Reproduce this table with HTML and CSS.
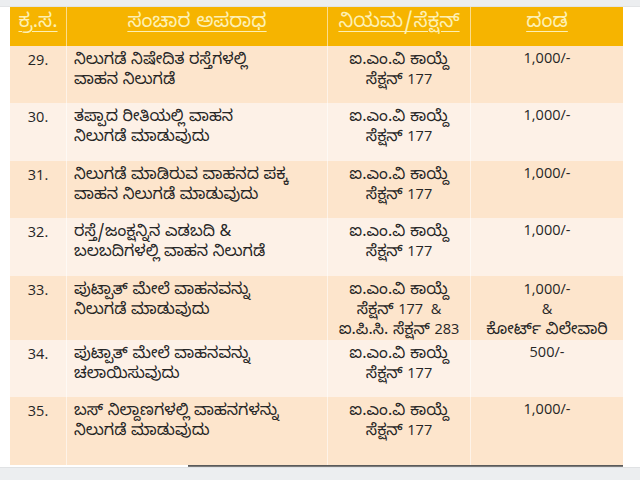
FILE: index.html
```html
<!DOCTYPE html>
<html lang="kn">
<head>
<meta charset="utf-8">
<link rel="stylesheet" href="styles.css">
</head>
<body>
<div class="topbar"></div>
<div class="sheet">
  <div class="grid">
    <div class="cell head">ಕ್ರ.ಸ.</div>
    <div class="cell head">ಸಂಚಾರ ಅಪರಾಧ</div>
    <div class="cell head">ನಿಯಮ/ಸೆಕ್ಷನ್</div>
    <div class="cell head">ದಂಡ</div>

    <div class="cell num odd">29.</div>
    <div class="cell txt odd">ನಿಲುಗಡೆ ನಿಷೇದಿತ ರಸ್ತೆಗಳಲ್ಲಿ<br>ವಾಹನ ನಿಲುಗಡೆ</div>
    <div class="cell ctr odd">ಐ.ಎಂ.ವಿ ಕಾಯ್ದೆ<br>ಸೆಕ್ಷನ್ <span class="d">177</span></div>
    <div class="cell ctr odd lat">1,000/-</div>

    <div class="cell num even">30.</div>
    <div class="cell txt even">ತಪ್ಪಾದ ರೀತಿಯಲ್ಲಿ ವಾಹನ<br>ನಿಲುಗಡೆ ಮಾಡುವುದು</div>
    <div class="cell ctr even">ಐ.ಎಂ.ವಿ ಕಾಯ್ದೆ<br>ಸೆಕ್ಷನ್ <span class="d">177</span></div>
    <div class="cell ctr even lat">1,000/-</div>

    <div class="cell num odd">31.</div>
    <div class="cell txt odd">ನಿಲುಗಡೆ ಮಾಡಿರುವ ವಾಹನದ ಪಕ್ಕ<br>ವಾಹನ ನಿಲುಗಡೆ ಮಾಡುವುದು</div>
    <div class="cell ctr odd">ಐ.ಎಂ.ವಿ ಕಾಯ್ದೆ<br>ಸೆಕ್ಷನ್ <span class="d">177</span></div>
    <div class="cell ctr odd lat">1,000/-</div>

    <div class="cell num even">32.</div>
    <div class="cell txt even">ರಸ್ತೆ/ಜಂಕ್ಷನ್ನಿನ ಎಡಬದಿ &amp;<br>ಬಲಬದಿಗಳಲ್ಲಿ ವಾಹನ ನಿಲುಗಡೆ</div>
    <div class="cell ctr even">ಐ.ಎಂ.ವಿ ಕಾಯ್ದೆ<br>ಸೆಕ್ಷನ್ <span class="d">177</span></div>
    <div class="cell ctr even lat">1,000/-</div>

    <div class="cell num odd">33.</div>
    <div class="cell txt odd">ಪುಟ್ಪಾತ್ ಮೇಲೆ ವಾಹನವನ್ನು<br>ನಿಲುಗಡೆ ಮಾಡುವುದು</div>
    <div class="cell ctr odd">ಐ.ಎಂ.ವಿ ಕಾಯ್ದೆ<br>ಸೆಕ್ಷನ್ <span class="d">177 &nbsp;&amp;</span><br>ಐ.ಪಿ.ಸಿ. ಸೆಕ್ಷನ್ <span class="d">283</span></div>
    <div class="cell ctr odd"><span class="d">1,000/-</span><br><span class="d">&amp;</span><br>ಕೋರ್ಟ್ ವಿಲೇವಾರಿ</div>

    <div class="cell num even">34.</div>
    <div class="cell txt even">ಪುಟ್ಪಾತ್ ಮೇಲೆ ವಾಹನವನ್ನು<br>ಚಲಾಯಿಸುವುದು</div>
    <div class="cell ctr even">ಐ.ಎಂ.ವಿ ಕಾಯ್ದೆ<br>ಸೆಕ್ಷನ್ <span class="d">177</span></div>
    <div class="cell ctr even lat">500/-</div>

    <div class="cell num odd">35.</div>
    <div class="cell txt odd">ಬಸ್ ನಿಲ್ದಾಣಗಳಲ್ಲಿ ವಾಹನಗಳನ್ನು<br>ನಿಲುಗಡೆ ಮಾಡುವುದು</div>
    <div class="cell ctr odd">ಐ.ಎಂ.ವಿ ಕಾಯ್ದೆ<br>ಸೆಕ್ಷನ್ <span class="d">177</span></div>
    <div class="cell ctr odd lat">1,000/-</div>
  </div>
  <div class="edge"></div>
</div>
<div class="bottombar"></div>
</body>
</html>
```

FILE: styles.css
```css
html, body {
  margin: 0;
  padding: 0;
  background: #ffffff;
  width: 640px;
  height: 480px;
  overflow: hidden;
}
body {
  font-family: "Noto Sans Kannada", "Open Sans", "Noto Sans", sans-serif;
  color: #262626;
  font-size: 16px;
}
.topbar {
  height: 6px;
  background: #eceef0;
  border-bottom: 1px solid #e2e4e6;
}
.sheet {
  margin-left: 10px;
  width: 613px;
}
.grid {
  display: grid;
  grid-template-columns: 56px 261px 143px 153px;
  grid-template-rows: 39px 57px 58px 57px 58px 64px 57px 68px;
}
.cell {
  box-sizing: border-box;
  border-left: 1px solid rgba(255, 255, 255, 0.55);
  padding-top: 6px;
  line-height: 20px;
  white-space: nowrap;
  min-height: 0;
}
.cell:nth-child(4n+1) {
  border-left: none;
}
.head {
  background: #f6b400;
  color: #fdf0b4;
  text-align: center;
  text-decoration: underline;
  text-decoration-thickness: 1px;
  text-underline-offset: 4px;
  font-size: 20px;
  line-height: 24px;
  padding-top: 6px;
}
.odd { background: #fde5cc; }
.even { background: #fdf1e7; }
.num {
  text-align: center;
  font-family: "Open Sans", "Noto Sans", sans-serif;
  font-size: 14.5px;
  padding-top: 4px;
}
.lat {
  font-family: "Open Sans", "Noto Sans", sans-serif;
  font-size: 14.5px;
  padding-top: 2px;
}
.d {
  font-family: "Open Sans", "Noto Sans", sans-serif;
  font-size: 14.5px;
  line-height: 1;
}
.txt { padding-left: 7px; }
.ctr { text-align: center; }
.edge {
  margin-left: 178px;
  height: 2px;
  background: linear-gradient(#4a4a4a, #8a8a8a);
}
.bottombar {
  height: 14px;
  background: #eceef0;
  border-top: 1px solid #e0e2e4;
}
```
